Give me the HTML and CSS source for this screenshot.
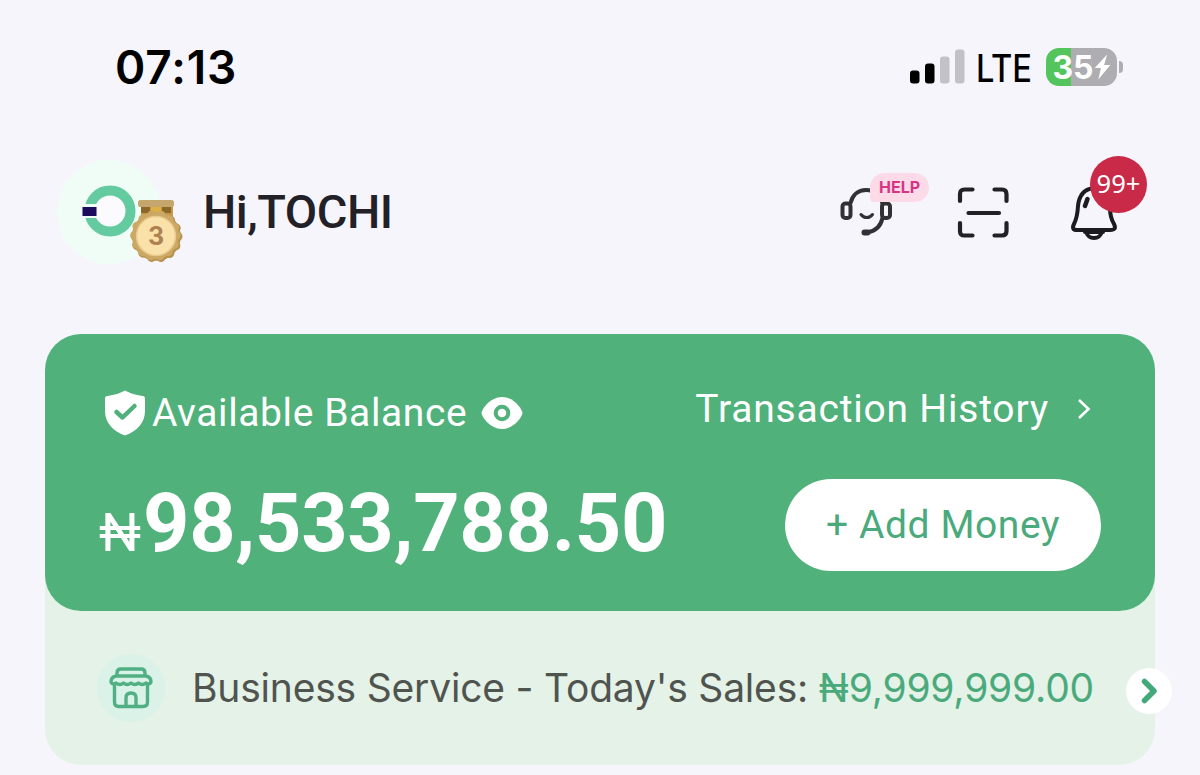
FILE: index.html
```html
<!DOCTYPE html>
<html lang="en">
<head>
    <meta charset="UTF-8">
    <meta name="viewport" content="width=device-width, initial-scale=1.0">
    <title>Wallet Home</title>
    <link rel="stylesheet" href="styles.css">
</head>
<body>

    <!-- Status bar -->
    <div class="status-bar">
        <span class="time">07:13</span>
        <div class="status-right">
            <svg class="signal" width="56" height="36" viewBox="0 0 56 36">
                <rect x="0" y="21.500" width="9.500" height="13" rx="3" fill="#000"/>
                <rect x="15" y="14.500" width="9.500" height="20" rx="3" fill="#000"/>
                <rect x="30" y="7.500" width="9.500" height="27" rx="3" fill="#c2c1c7"/>
                <rect x="45" y="0.500" width="9.500" height="34" rx="3" fill="#c2c1c7"/>
            </svg>
            <span class="network">LTE</span>
            <div class="battery">
                <span class="battery-text">35</span>
                <svg width="17" height="26" viewBox="0 0 16 25"><path d="M12.500 0.500L0.500 13.500H6.500L4 24.500L15.500 10.500H9.500Z" fill="#fff"/></svg>
            </div>
            <span class="battery-cap"></span>
        </div>
    </div>

    <!-- Greeting and icons -->
    <div class="header">
        <div class="avatar">
            <svg width="106" height="106" viewBox="0 0 106 106">
                <circle cx="53" cy="53" r="52" fill="#effdf6"/>
                <circle cx="54" cy="52" r="20.500" fill="#fbfaff" stroke="#63cb9f" stroke-width="10"/>
                <path d="M25 45H41V59H25Z" fill="#effdf6"/>
                <rect x="26.500" y="48" width="14" height="9" fill="#1c0c5b"/>
            </svg>
            <div class="medal">
                <svg width="56" height="66" viewBox="0 0 56 66">
                    <rect x="11" y="7" width="32" height="12" fill="#c59a48"/>
                    <rect x="11" y="8" width="9" height="7" fill="#8d6727"/>
                    <rect x="32" y="8" width="9" height="7" fill="#8d6727"/>
                    <rect x="21" y="7" width="10" height="12" fill="#ddb046"/>
                    <rect x="8" y="2" width="36" height="7" rx="2.500" fill="#c5a66c"/>
                    <circle cx="26.500" cy="38.500" r="24.300" fill="#b8914c"/>
                    <circle cx="26.500" cy="38.500" r="21.500" fill="none" stroke="#b8914c" stroke-width="9" stroke-linecap="round" stroke-dasharray="0.010 9.639"/>
                    <circle cx="25.500" cy="37.500" r="23.500" fill="#cba864"/>
                    <circle cx="25.500" cy="37.500" r="21" fill="none" stroke="#cba864" stroke-width="8.500" stroke-linecap="round" stroke-dasharray="0.010 9.415"/>
                    <circle cx="26" cy="38" r="19.500" fill="#fae1aa" stroke="#e9ca8c" stroke-width="1.500"/>
                </svg>
                <span class="medal-number">3</span>
            </div>
        </div>
        <h1 class="greeting">Hi,TOCHI</h1>

        <div class="actions">
            <div class="action help">
                <svg width="54" height="54" viewBox="0 0 54 54" fill="none" stroke="#303036" stroke-width="4" stroke-linecap="round">
                    <path d="M10.500 17C12.500 9 18 4 26 4C35 4 41 10 42.500 18"/>
                    <rect x="2.500" y="17.500" width="8" height="14.500" rx="3"/>
                    <rect x="42" y="17.500" width="8" height="14.500" rx="3"/>
                    <path d="M42.500 32C40.500 41 36 45 28 46"/>
                    <path d="M24.500 46.500H27.500" stroke-width="6"/>
                    <path d="M21 28.500C24 32.500 29.500 32.500 32.500 28.500" stroke-width="3"/>
                </svg>
                <span class="help-tag">HELP</span>
            </div>
            <svg class="action scan" width="56" height="56" viewBox="0 0 56 56" fill="none" stroke="#222226" stroke-width="4.200" stroke-linecap="round">
                <path d="M4 16V9Q4 4.500 8.500 4.500H16.500M38.500 4.500H46Q50.500 4.500 50.500 9V16M50.500 38V46Q50.500 50.500 46 50.500H38.500M16.500 50.500H8.500Q4 50.500 4 46V38M12.500 28H43"/>
            </svg>
            <div class="action bell">
                <svg width="50" height="60" viewBox="0 0 50 60" fill="none" stroke="#1c1c20" stroke-width="4" stroke-linecap="round" stroke-linejoin="round">
                    <path d="M24 5C14 6 9 13 8 23C7.500 32 6 37 4 41C2 45 3 47 7 47H40C45 47 46 45 44 41C41 36 40 32 40 25C39 13 34 6 24 5Z"/>
                    <path d="M16.500 49C17 57 31 57 31.500 49M15 49H33"/>
                    <path d="M15 23L17.500 16" stroke-width="4.500"/>
                </svg>
                <span class="count">99+</span>
            </div>
        </div>
    </div>

    <!-- Balance card -->
    <div class="wallet">
        <div class="balance-card">
            <div class="card-top">
                <svg width="42" height="46" viewBox="0 0 42 46">
                    <path d="M21 0.500C26 3.500 34 5.500 39 6Q41 6.300 41 8.500V21C41 33 33 41 21 45.500C9 41 1 33 1 21V8.500Q1 6.300 3 6C8 5.500 16 3.500 21 0.500Z" fill="#fff"/>
                    <path d="M12.500 22L18.500 27.500L30.500 16" fill="none" stroke="#50b17b" stroke-width="4.500" stroke-linecap="round" stroke-linejoin="round"/>
                </svg>
                <span class="balance-label">Available Balance</span>
                <svg width="42" height="34" viewBox="0 0 42 34">
                    <path d="M0.500 17C1 13 9 1 21 1C33 1 41 13 41.500 17C41 21 33 33 21 33C9 33 1 21 0.500 17Z" fill="#fff"/>
                    <circle cx="21" cy="17" r="6.300" fill="none" stroke="#50b17b" stroke-width="4"/>
                </svg>
                <a class="history">Transaction History</a>
                <svg class="history-arrow" width="14" height="22" viewBox="0 0 14 22"><path d="M2 2L11.500 11L2 20" fill="none" stroke="#fff" stroke-width="2.600"/></svg>
            </div>
            <div class="card-bottom">
                <div class="amount"><span class="currency">₦</span><span class="figure">98,533,788.50</span></div>
                <button class="add-money">+ Add Money</button>
            </div>
        </div>

        <div class="business">
            <span class="shop">
                <svg width="44" height="42" viewBox="0 0 44 42" fill="none" stroke="#50b083" stroke-width="3.400" stroke-linecap="round" stroke-linejoin="round">
                    <path d="M8 9V6Q8 2 12 2H32Q36 2 36 6V9M7 9H37Q42 10 42 15Q41 18 37 16Q33 19 29.500 16Q26 19 22 16Q18 19 14.500 16Q11 19 7 16Q3 18 2 15Q2 10 7 9Z"/>
                    <path d="M5.500 18V35Q5.500 39.500 10 39.500H34Q38.500 39.500 38.500 35V18M17 39V31Q17 26 22 26Q27 26 27 31V39"/>
                </svg>
            </span>
            <span class="sales">Business Service - Today's Sales: <b>₦9,999,999.00</b></span>
            <span class="next">
                <svg width="18" height="26" viewBox="0 0 18 26"><path d="M4.500 3.500L14 13L4.500 22.500" fill="none" stroke="#42aa78" stroke-width="5.500" stroke-linecap="round" stroke-linejoin="round"/></svg>
            </span>
        </div>
    </div>

</body>
</html>
```
FILE: styles.css
```css
body {
    margin: 0;
    height: 775px;
    overflow: hidden;
    background: #f6f5fb;
    font-family: Roboto, "Liberation Sans", sans-serif;
}

svg {
    display: block;
    flex: none;
}

/* Status bar */
.status-bar {
    display: flex;
    align-items: center;
    justify-content: space-between;
    height: 134px;
    padding: 0 77px 0 115px;
    font-family: Inter, sans-serif;
    color: #000;
}

.time {
    font-size: 46px;
    font-weight: 600;
    letter-spacing: 0.9px;
}

.status-right {
    display: flex;
    align-items: center;
}

.network {
    margin: 3px 0 0 10px;
    width: 59px;
    font-size: 37.5px;
    font-weight: 500;
    letter-spacing: -0.3px;
    transform: scaleX(0.87);
    transform-origin: left;
}

.battery {
    display: flex;
    align-items: center;
    justify-content: center;
    margin-left: 11px;
    width: 71px;
    height: 38px;
    border-radius: 13px;
    background: linear-gradient(90deg, #54c45c 35%, #aeadb1 35%);
}

.battery-text {
    font-size: 32px;
    font-weight: 700;
    color: #fff;
}

.battery-cap {
    margin-left: 2px;
    width: 4px;
    height: 12px;
    border-radius: 0 6px 6px 0;
    background: #aeadb1;
}

/* Greeting */
.header {
    display: flex;
    align-items: center;
    height: 154px;
    padding-left: 56px;
}

.avatar {
    position: relative;
    width: 106px;
    height: 106px;
    margin-top: 2px;
}

.medal {
    position: absolute;
    left: 74px;
    top: 39px;
}

.medal-number {
    position: absolute;
    left: 0;
    top: 23px;
    width: 52px;
    text-align: center;
    font: 700 25px/30px Inter, sans-serif;
    color: #ad8250;
}

.greeting {
    margin: 0 0 0 41px;
    font-size: 47px;
    font-weight: 500;
    letter-spacing: -0.5px;
    color: #222127;
    white-space: nowrap;
}

.actions {
    display: flex;
    align-items: center;
    margin-left: auto;
    padding: 3px 80px 0 0;
}

.action {
    position: relative;
}

.scan {
    margin-left: 62px;
}

.bell {
    margin-left: 58px;
}

.help-tag {
    position: absolute;
    left: 30px;
    top: -13px;
    width: 59px;
    height: 29px;
    border-radius: 15px 15px 15px 4px;
    background: #fddae8;
    color: #d63585;
    font: 700 16px/29px Inter, sans-serif;
    text-align: center;
}

.count {
    position: absolute;
    left: 20px;
    top: -27px;
    width: 57px;
    height: 57px;
    border-radius: 50%;
    background: #c92a48;
    color: #fff;
    font: 400 25.5px/55px "Noto Sans", sans-serif;
    text-align: center;
}

/* Balance card */
.wallet {
    margin: 46px 45px 0;
    height: 431px;
    border-radius: 36px;
    background: #e4f2e8;
}

.balance-card {
    box-sizing: border-box;
    height: 277px;
    padding: 56px 54px 0 54px;
    border-radius: 36px;
    background: #50b17b;
    color: #fff;
}

.card-top {
    display: flex;
    align-items: center;
    height: 46px;
    padding-left: 5px;
}

.balance-label {
    margin-left: 6px;
    width: 329px;
    font-size: 39px;
    letter-spacing: 0.6px;
    white-space: nowrap;
}

.history {
    margin: -9px 0 0 auto;
    font-size: 39px;
    letter-spacing: 0.8px;
    white-space: nowrap;
}

.history-arrow {
    margin: -8px 10px 0 28px;
}

.card-bottom {
    display: flex;
    align-items: center;
    justify-content: space-between;
    height: 92px;
    margin-top: 43px;
}

.amount {
    display: flex;
    align-items: baseline;
    margin-top: -4px;
    white-space: nowrap;
}

.currency {
    width: 43px;
    font-size: 53px;
}

.figure {
    margin-left: 1px;
    font-size: 81px;
    font-weight: 700;
    letter-spacing: -0.3px;
}

.add-money {
    width: 316px;
    height: 92px;
    border: none;
    border-radius: 46px;
    background: #fff;
    color: #4aaa7b;
    font: 400 39px Roboto, sans-serif;
    letter-spacing: 0.6px;
}

/* Business row */
.business {
    display: flex;
    align-items: center;
    height: 154px;
    padding-left: 52px;
    margin-right: -17px;
}

.shop {
    display: flex;
    align-items: center;
    justify-content: center;
    width: 68px;
    height: 68px;
    border-radius: 50%;
    background: #daf2e7;
}

.sales {
    margin: -2px 0 0 27px;
    font-family: Inter, sans-serif;
    font-size: 39px;
    letter-spacing: -0.2px;
    color: #50544f;
    white-space: nowrap;
}

.sales b {
    font-weight: 400;
    color: #4aaa7b;
}

.next {
    display: flex;
    align-items: center;
    justify-content: center;
    margin: 5px 0 0 auto;
    width: 46px;
    height: 46px;
    border-radius: 50%;
    background: #fff;
}
```
